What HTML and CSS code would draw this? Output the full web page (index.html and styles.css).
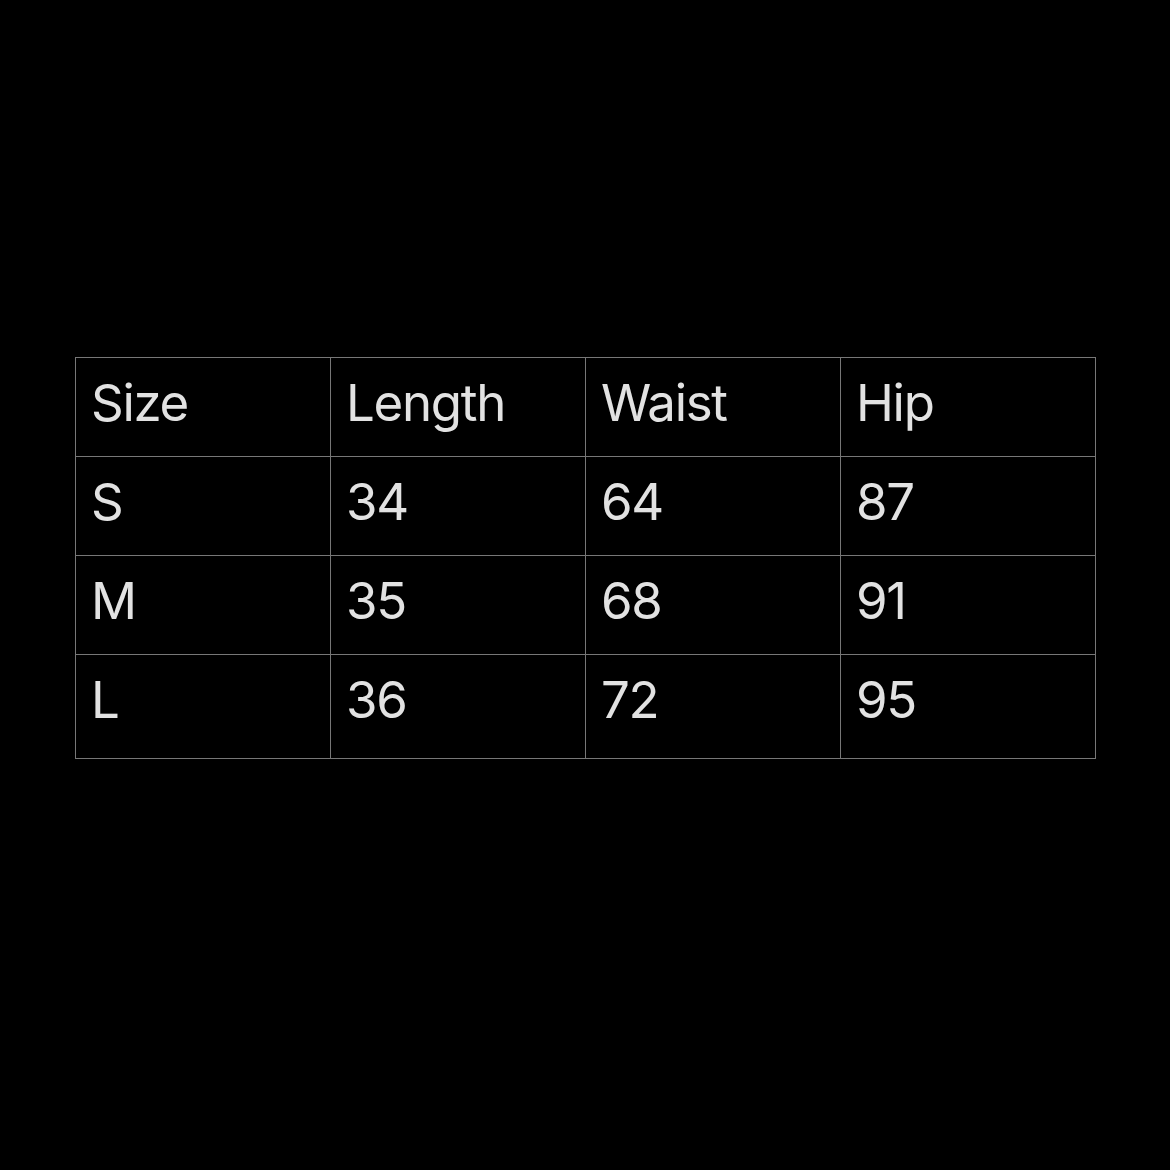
FILE: index.html
```html
<!DOCTYPE html>
<html lang="en">
<head>
<meta charset="utf-8">
<title>Size chart</title>
<link rel="stylesheet" href="styles.css">
</head>
<body>
<main class="page">
  <div class="chart">
    <div class="cell">Size</div>
    <div class="cell">Length</div>
    <div class="cell">Waist</div>
    <div class="cell">Hip</div>
    <div class="cell">S</div>
    <div class="cell">34</div>
    <div class="cell">64</div>
    <div class="cell">87</div>
    <div class="cell">M</div>
    <div class="cell">35</div>
    <div class="cell">68</div>
    <div class="cell">91</div>
    <div class="cell">L</div>
    <div class="cell">36</div>
    <div class="cell">72</div>
    <div class="cell">95</div>
  </div>
</main>
</body>
</html>
```
FILE: styles.css
```css
html, body {
  margin: 0;
  padding: 0;
  background: #000;
}
.page {
  width: 1170px;
  height: 1170px;
  padding: 357px 0 0 75px;
  box-sizing: border-box;
}
.chart {
  display: grid;
  grid-template-columns: repeat(4, 255px);
  grid-template-rows: repeat(3, 99px) 104px;
  width: 1020px;
  border-left: 1px solid #777;
  border-top: 1px solid #777;
  font-family: Inter, "Noto Sans", sans-serif;
  font-size: 51px;
  letter-spacing: -1.3px;
  line-height: 52px;
  color: #e2e2e2;
}
.cell {
  border-right: 1px solid #777;
  border-bottom: 1px solid #777;
  padding: 19px 0 0 15px;
}
```
